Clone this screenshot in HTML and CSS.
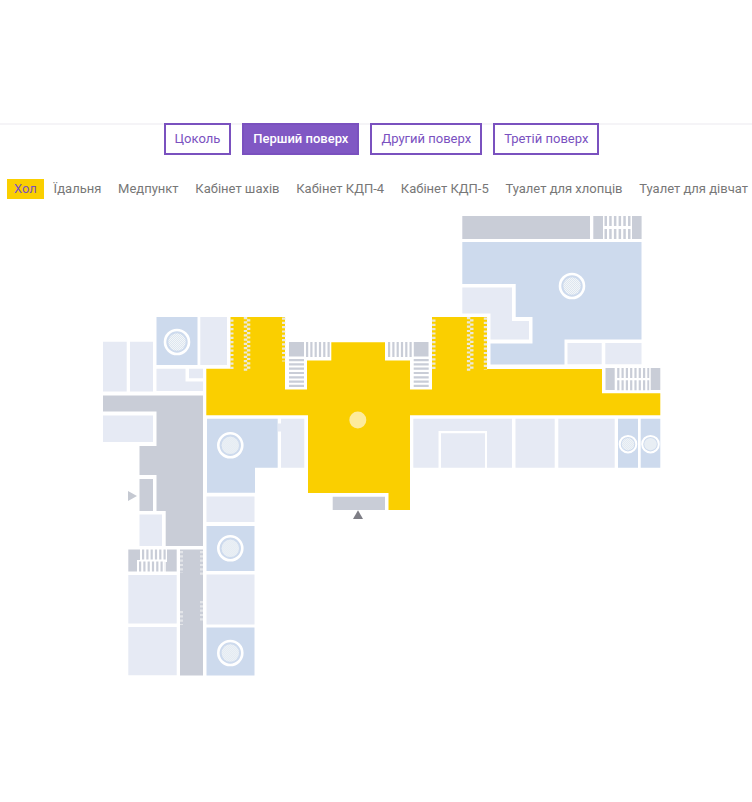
FILE: index.html
```html
<!DOCTYPE html>
<html lang="uk">
<head>
<meta charset="utf-8">
<meta name="viewport" content="width=device-width, initial-scale=1">
<title>План школи</title>
<link rel="stylesheet" href="styles.css">
</head>
<body>
<main class="plan">
  <nav class="floors">
    <button class="floor" type="button">Цоколь</button>
    <button class="floor floor-active" type="button">Перший поверх</button>
    <button class="floor" type="button">Другий поверх</button>
    <button class="floor" type="button">Третій поверх</button>
  </nav>
  <nav class="rooms">
    <a class="room room-active" href="#hall">Хол</a>
    <a class="room" href="#canteen">Їдальня</a>
    <a class="room" href="#medical">Медпункт</a>
    <a class="room" href="#chess">Кабінет шахів</a>
    <a class="room" href="#kdp4">Кабінет КДП-4</a>
    <a class="room" href="#kdp5">Кабінет КДП-5</a>
    <a class="room" href="#boys">Туалет для хлопців</a>
    <a class="room" href="#girls">Туалет для дівчат</a>
  </nav>
  <svg class="map" viewBox="0 210 752 470" aria-hidden="true">
    <defs>
      <pattern id="hatch" width="2" height="2" patternUnits="userSpaceOnUse">
        <rect class="hatch-base" width="2" height="2"/>
        <path class="hatch-line" d="M0 0h1v1H0zM1 1h1v1H1z"/>
      </pattern>
      <g id="pin"><circle class="ring" r="12"/><circle class="dot" r="8.7"/></g>
      <g id="pin-small"><circle class="ring ring-small" r="8.3"/><circle class="dot" r="6.2"/></g>
    </defs>

    <!-- Upper right wing -->
    <g class="gray">
      <path d="M462.3 216H590v23H462.3zM593.3 216H603v23h-9.7zM632 216h9.6v23H632z"/>
      <path d="M605.5 368h9.2v22h-9.2zM650.7 368h9.6v22h-9.6z"/>
    </g>
    <path class="blue" d="M462.3 242H641.5V339.5H564.5V364.5H490.5V343.5H532.5V317H515.7V284H462.3z"/>
    <path class="light" d="M462.3 287.5H512V321H529V339.5H490.5V313.5H462.3z"/>
    <path class="light" d="M567.5 343h34.2v21.3h-34.2zM605.3 343h36.2v21.3h-36.2z"/>

    <!-- Left wing -->
    <path class="light" d="M103 341.7h23.7v49.8H103zM130 341.7h23v49.8h-23zM200.3 317H227v48h-26.7z"/>
    <path class="light" d="M156.5 368.8h29v12.7H203V391H156.5zM189 368.8h14v9.5h-14z"/>
    <path class="blue" d="M156.5 317h41v48h-41z"/>
    <path class="gray" d="M103 395.5H203V546H165.7V511H156.5V475H139.5V446H156.5V411.5H103z"/>
    <path class="light" d="M103 415.5h50V442h-50zM139.5 514.5H162V546h-22.5z"/>
    <path class="gray" d="M139.5 479H153v32h-13.5z"/>
    <path class="arrow-side" d="M128 491l9 5-9 5z"/>
    <path class="blue" d="M207 418.7H277.7V467.7H255V492.7H207zM206.5 526h48v45h-48zM206.5 627.5h48v48h-48z"/>
    <path class="light" d="M281 418.7h23.3v49H281V431.5h-3v-8h3zM206.5 496.5h48V522h-48zM206.5 574.5h48v50h-48z"/>
    <path class="light" d="M128.3 575h48.4v48.5h-48.4zM128.3 627h48.4v48.3h-48.4z"/>
    <path class="gray" d="M128.3 549.5H140V560h-3v11.5h-8.7zM167 549.5h9.7v22h-11V562h1.3zM180 549.5h23v126h-23z"/>
    <g class="marks">
      <path d="M181.5 551v22M201.5 551v24M181.5 611v14M201.5 601v20"/>
    </g>

    <!-- Lower right rooms -->
    <path class="light" d="M413.3 418.7H512v49h-25V431h-48.5v36.7h-25.2zM441 433.3h44v34.4h-44zM515.5 418.7h39.2v49h-39.2zM558.3 418.7h56.4v49h-56.4z"/>
    <path class="blue" d="M618 418.7h20v49h-20zM640.7 418.7h19.6v49h-19.6z"/>

    <!-- Hall -->
    <path class="hall" d="M206.3 368.8H230.5V317H285V389.5H307V360.5H331.3V342.3H385V360.5H410V389.5H432V317H487V369H602V393.3H660.3V415.3H410V510H388.5V493H308V415.3H206.3z"/>
    <circle class="hall-dot" cx="357.8" cy="420" r="8.5"/>
    <g class="marks marks-hall">
      <path d="M231.8 319.5v50M245.5 317v54M248.6 319.2v50M283.7 317.5v44M433.8 319.5v50M468.6 317v54M471.8 319.2v50M485.5 317.5v52"/>
    </g>

    <!-- Stairs -->
    <path class="gray" d="M289 342h15v14.5h-15zM413.8 342h14.7v14.5h-14.7zM332.7 496.7H385V510h-52.3z"/>
    <g class="steps">
      <path d="M306 349.5h25M388 349.5h25" stroke-width="15"/>
      <path d="M296.5 359v28M421.2 359v28" stroke-width="15"/>
    </g>
    <g class="steps steps-wide">
      <path d="M604.5 221h27M604.5 234h27" stroke-width="10"/>
    </g>
    <g class="steps">
      <path d="M617.2 373h32M617.2 385.3h32" stroke-width="10"/>
      <path d="M142 554.5h24M139 566.5h26" stroke-width="10"/>
    </g>
    <path class="arrow-main" d="M358 510.3l5 8.7h-10z"/>

    <use href="#pin" x="572" y="286"/>
    <use href="#pin" x="177" y="342"/>
    <use href="#pin" x="230.3" y="445.3"/>
    <use href="#pin" x="230.3" y="548.3"/>
    <use href="#pin" x="230.3" y="653"/>
    <use href="#pin-small" x="628" y="444.2"/>
    <use href="#pin-small" x="650.5" y="444.2"/>
  </svg>
</main>
</body>
</html>
```
FILE: styles.css
```css
* {
  box-sizing: border-box;
}

body {
  margin: 0;
  background: #fff;
  color: #777;
  font-family: Roboto, "Liberation Sans", sans-serif;
  font-size: 13px;
  line-height: 20px;
}

.plan {
  margin-top: 123px;
  border-top: 2px solid #f5f4f7;
}

.floors {
  display: flex;
  justify-content: center;
  gap: 11px;
  margin-top: -2px;
  padding-left: 11px;
}

.floor {
  height: 32px;
  padding: 0 9px;
  border: 2px solid #7a51bf;
  background: #fff;
  color: #7a51bf;
  font: inherit;
  cursor: pointer;
}

.floor-active {
  background: #8058c4;
  color: #fff;
  font-weight: 500;
}

.rooms {
  display: flex;
  justify-content: space-between;
  margin-top: 24px;
  padding: 0 0 0 7px;
  white-space: nowrap;
}

.room {
  padding: 0 7px;
  color: #777;
  text-decoration: none;
}

.room:last-child {
  padding-right: 4px;
}

.room-active {
  background: #facf00;
  color: #7a51bf;
}

.map {
  display: block;
  width: 100%;
  margin-top: 11px;
}

.gray {
  fill: #c9cdd7;
}

.light {
  fill: #e6eaf4;
}

.blue {
  fill: #cddaed;
}

.hall {
  fill: #facf00;
}

.hall-dot {
  fill: #fdeb9c;
}

.arrow-main {
  fill: #7e7e86;
}

.arrow-side {
  fill: #c5c9d2;
}

.ring {
  fill: none;
  stroke: #fff;
  stroke-width: 2.6;
}

.ring-small {
  stroke-width: 2;
}

.dot {
  fill: url(#hatch);
}

.hatch-base {
  fill: #f3f6f8;
}

.hatch-line {
  fill: #dde6f0;
}

.steps {
  fill: none;
  stroke: #c9cdd7;
  stroke-dasharray: 2.2 2.1;
}

.steps-wide {
  stroke-dasharray: 2.5 2.2;
}

.marks {
  fill: none;
  stroke: #e3e5e9;
  stroke-width: 3;
  stroke-dasharray: 2.2 2.1;
}

.marks-hall {
  stroke: #ece9dc;
  stroke-width: 3.4;
}
```
